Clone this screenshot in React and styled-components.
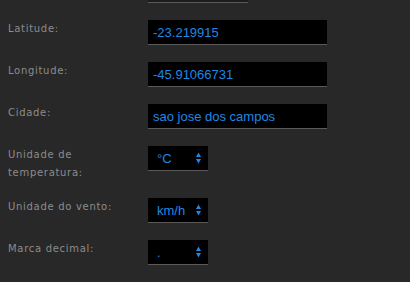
import React from 'react';
import styled, {createGlobalStyle} from 'styled-components';

const GlobalStyle = createGlobalStyle`
  html, body {
    margin: 0;
    padding: 0;
    background: #282828;
    overflow: hidden;
  }
`;

const Form = styled.div`
  margin-top: -22px;
  padding-left: 8px;
`;

const Row = styled.div`
  display: flex;
  align-items: flex-start;
  margin-bottom: ${p => p.$tight ? 16 : 17}px;
`;

const Label = styled.label`
  width: 140px;
  flex-shrink: 0;
  font-family: "DejaVu Sans", sans-serif;
  font-size: 10px;
  letter-spacing: 0.7px;
  line-height: 18px;
  color: #8c8c8c;
`;

const TextField = styled.input`
  box-sizing: border-box;
  width: ${p => p.$width || 179}px;
  height: 25px;
  margin: 0;
  padding: 0 5px;
  border: 0;
  border-bottom: 1px solid #5a5a5a;
  background: ${p => p.$dim ? '#1c1c1c' : '#000'};
  color: #1e88e5;
  font-family: "Liberation Sans", Arial, sans-serif;
  font-size: 13px;
  outline: 0;
`;

const SelectWrap = styled.div`
  position: relative;
  width: 60px;
  height: 25px;
`;

const Select = styled.select`
  appearance: none;
  box-sizing: border-box;
  width: 60px;
  height: 25px;
  margin: 0;
  padding: 0 0 0 9px;
  border: 0;
  border-radius: 0;
  border-bottom: 1px solid #5a5a5a;
  background: #000;
  color: #1e88e5;
  font-family: "Liberation Sans", Arial, sans-serif;
  font-size: 13px;
  outline: 0;
`;

const Arrows = styled.svg`
  position: absolute;
  right: 7px;
  top: 6px;
  pointer-events: none;
`;

const SelectField = ({options}) => (
  <SelectWrap>
    <Select defaultValue={options[0]}>
      {options.map(o => <option key={o}>{o}</option>)}
    </Select>
    <Arrows width="5" height="12" viewBox="0 0 5 12">
      <path d="M2.5 0.5 L5 5 L0 5 Z" fill="#1e88e5" />
      <path d="M0 7 L5 7 L2.5 11.5 Z" fill="#1e88e5" />
    </Arrows>
  </SelectWrap>
);

export default function App() {
  return (
    <>
      <GlobalStyle />
      <Form>
        <Row>
          <Label />
          <TextField $width={100} $dim readOnly />
        </Row>
        <Row>
          <Label>Latitude:</Label>
          <TextField defaultValue="-23.219915" />
        </Row>
        <Row>
          <Label>Longitude:</Label>
          <TextField defaultValue="-45.91066731" />
        </Row>
        <Row>
          <Label>Cidade:</Label>
          <TextField defaultValue="sao jose dos campos" />
        </Row>
        <Row $tight>
          <Label>Unidade de<br />temperatura:</Label>
          <SelectField options={['°C', '°F']} />
        </Row>
        <Row>
          <Label>Unidade do vento:</Label>
          <SelectField options={['km/h', 'mph', 'm/s']} />
        </Row>
        <Row>
          <Label>Marca decimal:</Label>
          <SelectField options={['.', ',']} />
        </Row>
      </Form>
    </>
  );
}
